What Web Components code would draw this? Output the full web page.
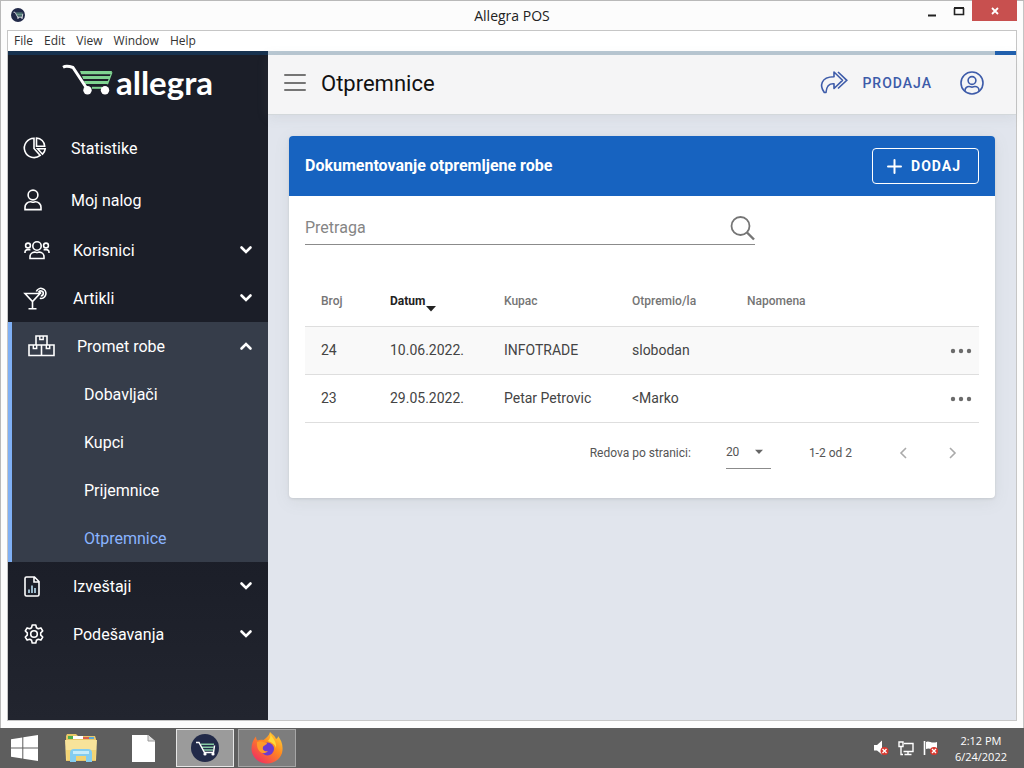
<!DOCTYPE html>
<html lang="sr-Latn">
<head>
<meta charset="utf-8">
<meta name="viewport" content="width=device-width, initial-scale=1">
<title>Allegra POS</title>
<style>
  :root {
    --primary: #1763c0;
    --accent: #8ab4ff;
    --sidebar: #1b1e28;
    --sidebar-open: #363d4a;
    --font-app: Roboto, "Liberation Sans", sans-serif;
    --font-os: "Open Sans", "Noto Sans", sans-serif;
  }
  html, body { height: 100%; }
  body {
    margin: 0;
    display: flex;
    flex-direction: column;
    font-family: var(--font-app);
    background: #5e5e5e;
  }
</style>
</head>
<body>
<os-window title-text="Allegra POS">
  <app-sidebar slot="side">
    <nav-item icon="pie" label="Statistike" tall></nav-item>
    <nav-item icon="user" label="Moj nalog" tall></nav-item>
    <nav-item icon="users" label="Korisnici" group></nav-item>
    <nav-item icon="cocktail" label="Artikli" group></nav-item>
    <nav-item icon="boxes" label="Promet robe" group open>
      <nav-sub label="Dobavljači"></nav-sub>
      <nav-sub label="Kupci"></nav-sub>
      <nav-sub label="Prijemnice"></nav-sub>
      <nav-sub label="Otpremnice" active></nav-sub>
    </nav-item>
    <nav-item icon="report" label="Izveštaji" group></nav-item>
    <nav-item icon="gear" label="Podešavanja" group></nav-item>
  </app-sidebar>
  <app-header heading="Otpremnice"></app-header>
  <doc-card heading="Dokumentovanje otpremljene robe">
    <search-field></search-field>
    <doc-table></doc-table>
    <table-pager></table-pager>
  </doc-card>
</os-window>
<os-taskbar></os-taskbar>

<script>
// name: [width, height, svg content]
const ICONS = {
  pie: [22, 22, `<path d="M10 1.2A9.7 9.7 0 1 0 16.2 18.400L10 11.5Z"/><path d="M12.5 1a8.6 8.6 0 0 1 8.2 8.2h-8.2Z"/><path d="M13.6 11.8h7.6a9 9 0 0 1-2.7 5.4Z"/>`],
  user: [18, 22, `<circle cx="9" cy="6" r="4.9"/><path d="M1 20.600v-2.300a5.600 5.600 0 0 1 5.600-5.600c1 0 1.200.5 2.400.5s1.400-.5 2.400-.5a5.600 5.600 0 0 1 5.600 5.600v2.300Z"/>`],
  users: [26, 20, `<circle cx="13" cy="6" r="4.2"/><circle cx="4" cy="5.500" r="2.400"/><circle cx="22" cy="5.500" r="2.400"/><path d="M6 18.500v-1.800a4.600 4.600 0 0 1 4.600-4.600c.9 0 1.400.4 2.400.4s1.500-.4 2.400-.4a4.600 4.600 0 0 1 4.600 4.600v1.800ZM1 13v-.8a2.600 2.600 0 0 1 2.600-2.600h2.800M25 13v-.8a2.600 2.600 0 0 0-2.600-2.600h-2.800"/>`],
  cocktail: [24, 23, `<path d="M1 6.500h15L8.500 14.500ZM8.500 14.500v7M4.500 21.700h8"/><path d="M12.300 4.500a5 5 0 1 1 3.500 6.800"/><path d="M14.500 5.500a2.500 2.500 0 1 1 2.300 3.400M15 6.500l2-1"/>`],
  boxes: [27, 22, `<path d="M8 10V1h11v9M1 10h25v10.500H1ZM13.500 10v10.500"/><path d="M11.800 1v3.500h3.400V1M5.300 10v3.500h3.400V10M18.300 10v3.500h3.400V10" stroke-width="1.400"/>`],
  report: [16, 21, `<path d="M2.500 1h8L15 5.500V18.500a1.500 1.500 0 0 1-1.500 1.500h-11A1.500 1.500 0 0 1 1 18.500V2.500A1.500 1.500 0 0 1 2.500 1ZM10 1v5h5"/><path d="M5 17v-3.500M8 17V9.500M11 17v-5" stroke="#b9dcf0"/>`],
  gear: [20, 20, `<circle cx="10" cy="10" r="3.300"/><path d="M8.200 1h3.600l.6 2.700 1.900 1.100 2.600-.9 1.800 3.100-2 1.900v2.200l2 1.900-1.800 3.100-2.600-.9-1.900 1.100-.6 2.700H8.200l-.6-2.700-1.900-1.100-2.600.9L1.300 13l2-1.900V8.900L1.300 7l1.800-3.100 2.600.9 1.900-1.100Z" stroke-linejoin="round"/>`],
  down: [12, 8, `<path d="M1.500 1.500 6 6l4.500-4.500" stroke-width="2.600" stroke-linecap="round"/>`],
  up: [12, 8, `<path d="M1.500 6.500 6 2l4.500 4.500" stroke-width="2.600" stroke-linecap="round"/>`],
  menu: [22, 19, `<path d="M1 2h20M1 10h20M1 17h20" stroke-width="2" stroke-linecap="round"/>`],
  share: [28, 23, `<path d="M14 1l8.500 8.300L14 17.500v-4.700c-4.500-.3-7.400 1.400-8 8.700H4.300C-.5 15 .5 5.800 14 5.700Z" stroke-linejoin="round"/><path d="M18 1l8.800 8.300L18 17.500"/>`],
  account: [24, 24, `<circle cx="12" cy="12" r="11"/><circle cx="12" cy="9.500" r="3.900"/><path d="M5 20.300v-.8a4 4 0 0 1 4-4c1.200 0 1.600.6 3 .6s1.800-.6 3-.6a4 4 0 0 1 4 4v.8"/>`],
  plus: [15, 15, `<path d="M7.500 1v13M1 7.500h13" stroke-width="2" stroke-linecap="round"/>`],
  search: [25, 25, `<circle cx="10.500" cy="10" r="9" stroke-width="1.800"/><path d="M17 16.500l7 7" stroke-width="2.400"/>`],
  dots: [22, 6, `<g fill="currentColor" stroke="none"><circle cx="3" cy="3" r="2.200"/><circle cx="11" cy="3" r="2.200"/><circle cx="19" cy="3" r="2.200"/></g>`],
  caret: [10, 6, `<path d="M1 .8h8L5 5Z" fill="currentColor" stroke="none"/>`],
  sort: [10, 7, `<path d="M0 1h10L5 6.500Z" fill="currentColor" stroke="none"/>`],
  prev: [8, 12, `<path d="M7 1 2 6l5 5"/>`],
  next: [8, 12, `<path d="M1 1l5 5-5 5"/>`],
  minimize: [8, 12, `<path d="M0 10.500h8" stroke-width="2"/>`],
  maximize: [10, 8, `<path d="M.5 1v6.500h9V1"/><path d="M0 1h10" stroke-width="2"/>`],
  close: [8, 8, `<path d="M1 1l6 6M7 1 1 7" stroke-width="1.800"/>`],
  cart: [48, 30, `<g fill="#7fd491" stroke="none"><path d="M17 6h32l-1.200 3.200H18.200ZM19 11h28.300l-1.200 3H20.200ZM21 16h24.500l-1.300 3H22.200ZM43.500 19l5-12 1 .5-4.500 12Z"/></g><path d="M0 2.200c3-1.600 6-1 10 .3L23.500 23" stroke="#fff" stroke-width="3" stroke-linejoin="round"/><path d="M29 22.800h10" stroke="#7fd491" stroke-width="2"/><circle cx="24.500" cy="25.200" r="4.200" fill="#fff" stroke="none"/><circle cx="42" cy="25.200" r="4.200" fill="#fff" stroke="none"/>`],
  badge: [28, 28, `<circle cx="14" cy="14" r="14" fill="#222a49" stroke="none"/><path d="M10 10.200h13M11 13.200h11.500M12 16h10" stroke="#86c9a4" stroke-width="1.500"/><path d="M5 8.500h3l5.500 10h9l1-7" stroke="#fff" stroke-width="1.500"/><circle cx="14" cy="20" r="1.600" fill="#fff" stroke="none"/><circle cx="22" cy="20" r="1.600" fill="#fff" stroke="none"/>`],
  windows: [27, 26, `<path d="M0 4.200 11.300 2.500v10H0ZM12.300 2.300 27 0v12.500H12.300ZM0 13.500h11.300v10L0 21.800ZM12.300 13.500H27V26l-14.700-2.300Z" fill="#fff" stroke="none"/>`],
  folder: [32, 30, `<g stroke="none"><path d="M1 3 2 1h9l2 2h17l1 3v22H1Z" fill="#e8c667"/><path d="M3 3h5v3H3Z" fill="#4fae4c"/><path d="M8 3h10v3H8Z" fill="#fff"/><path d="M18 4h6v2h-6Z" fill="#d9604c"/><path d="M24 4h5v2h-5Z" fill="#5aa8d8"/><path d="M0 7h32l-1 20H1Z" fill="#f8e39a"/><path d="M1 17h30l-.500 10H1.500Z" fill="#f2d374"/><path d="M5 29V20q0-4 4-4h14q4 0 4 4v9h-6v-6H11v6Z" fill="#84cdf0"/><path d="M8 18h16v3H8Z" fill="#c7ecfb"/></g>`],
  file: [23, 27, `<path d="M0 0h16l7 6v21H0Z" fill="#fff" stroke="none"/><path d="M16 0v6h7" fill="#ddd" stroke="#999" stroke-width="1"/>`],
  firefox: [32, 32, `<defs><linearGradient id="fx" x1="1" y1="0" x2="0.200" y2="1"><stop offset="0" stop-color="#ffe23c"/><stop offset=".45" stop-color="#ff8a20"/><stop offset="1" stop-color="#f02c62"/></linearGradient></defs><g stroke="none"><path d="M19 0c3 3 5 4 6 7 2-1 2-2 2-3 3 4 5 8 4.500 14C31 26 24 31.500 16 31.500S1 25.500.500 17.500C.3 12 2 8 5 4.500c0 2 .5 3 1.500 4 2-1 4-1 6-.5C15 6 18 4 19 0Z" fill="url(#fx)"/><circle cx="16.500" cy="17" r="6.500" fill="#6c3bd0"/><path d="M6 10c4-2 6 0 10 1 0 2-3 2-4 4-1 3 2 5 5 4-4 5-12 1-11-9Z" fill="#ff9a2a"/><path d="M19 1c2 5 7 8 6 15-1-4-5-6-8-7 2-2 3-5 2-8Z" fill="#ffd93a"/></g>`],
  sound: [15, 16, `<path d="M0 5h3l5-4.500v14L3 10.500H0Z" fill="#fff" stroke="none"/><circle cx="10.500" cy="11" r="4" fill="#d9382f" stroke="none"/><path d="M8.500 9l4 4M12.500 9l-4 4" stroke="#fff" stroke-width="1.300"/>`],
  network: [16, 15, `<path d="M6 2.500h9v8H5.500M10 10.500v3M6.500 13.500h7M1 1h4v4.500H1ZM3 5.500v8h2" stroke="#fff" stroke-width="1.400"/>`],
  flag: [16, 16, `<path d="M1.500 1v14" stroke="#fff"/><path d="M3 2c3-2 5 2 11 0v7C9 11 7 7 3 9Z" fill="#fff" stroke="none"/><circle cx="11" cy="11" r="4" fill="#d9382f" stroke="none"/><path d="M9 9l4 4M13 9l-4 4" stroke="#fff" stroke-width="1.300"/>`]
};

/**
 * <app-icon> - inline SVG icon
 *
 * @attr {string} name - key in ICONS
 * @attr {number} width - optional drawn width, height keeps the ratio
 */
class AppIcon extends HTMLElement {
  constructor() {
    super();
    this.attachShadow({ mode: 'open' });
  }

  connectedCallback() {
    const [w, h, body] = ICONS[this.getAttribute('name')];
    const width = Number(this.getAttribute('width')) || w;
    const height = Math.round(width * h / w);
    this.shadowRoot.innerHTML = `
      <style>
        :host { display: inline-flex; flex: none; }
        svg { display: block; overflow: visible; }
      </style>
      <svg width="${width}" height="${height}" viewBox="0 0 ${w} ${h}" fill="none"
        stroke="currentColor" stroke-width="1.6" aria-hidden="true">${body}</svg>
    `;
  }
}

/**
 * <os-window> - desktop window: title bar, menu bar, app area
 *
 * @slot side - left sidebar
 * @slot - main column
 */
class OsWindow extends HTMLElement {
  constructor() {
    super();
    this.attachShadow({ mode: 'open' });
  }

  connectedCallback() {
    const menus = ['File', 'Edit', 'View', 'Window', 'Help'];
    this.shadowRoot.innerHTML = `
      <style>
        :host {
          flex: 1;
          display: flex;
          flex-direction: column;
          box-sizing: border-box;
          padding: 0 7px 7px;
          background: #fcfcfc;
          box-shadow: inset 1px 1px #b9b9b9, inset -1px 0 #c4c4c4;
        }
        button { border: 0; padding: 0; background: none; font: inherit; color: inherit; }
        .title {
          display: grid;
          grid-template-columns: 1fr auto 1fr;
          height: 30px;
          font: 14px/32px var(--font-os);
          color: #222;
        }
        .title > app-icon { margin: 8px 4px; }
        .controls { display: flex; justify-content: flex-end; align-items: flex-start; color: #222; }
        .controls button { display: grid; place-items: center; width: 27px; height: 21px; }
        .controls .close { width: 45px; background: #c8504f; color: #fff; }
        .frame {
          flex: 1;
          display: flex;
          flex-direction: column;
          border: 1px solid #c6c6c6;
          background: #fff;
        }
        .menu { display: flex; gap: 11px; height: 20px; padding: 0 6px; font: 12px/20px var(--font-os); color: #333; }
        .app { flex: 1; display: flex; }
        .main { flex: 1; min-width: 0; background: #e1e5ed; }
        .progress { display: flex; justify-content: flex-end; height: 4px; background: #b9c8d3; }
        .progress i { width: 21px; background: #2160ad; }
      </style>
      <div class="title">
        <app-icon name="badge" width="14"></app-icon>
        <span>${this.getAttribute('title-text')}</span>
        <div class="controls">
          <button aria-label="Minimize"><app-icon name="minimize"></app-icon></button>
          <button aria-label="Maximize"><app-icon name="maximize"></app-icon></button>
          <button class="close" aria-label="Close"><app-icon name="close"></app-icon></button>
        </div>
      </div>
      <div class="frame">
        <div class="menu">${menus.map(m => `<button>${m}</button>`).join('')}</div>
        <div class="app">
          <slot name="side"></slot>
          <div class="main">
            <div class="progress"><i></i></div>
            <slot></slot>
          </div>
        </div>
      </div>
    `;
  }
}

/** <app-sidebar> - logo and navigation */
class AppSidebar extends HTMLElement {
  constructor() {
    super();
    this.attachShadow({ mode: 'open' });
  }

  connectedCallback() {
    this.shadowRoot.innerHTML = `
      <style>
        :host {
          flex: none;
          width: 260px;
          box-sizing: border-box;
          border-top: 4px solid #17324f;
          background: linear-gradient(var(--sidebar) 75%, #22252f);
          color: #fff;
        }
        .logo {
          display: flex;
          justify-content: center;
          gap: 5px;
          height: 67px;
          padding-top: 10px;
          box-sizing: border-box;
          font: bold 33px/34px Lato, sans-serif;
        }
      </style>
      <div class="logo"><app-icon name="cart"></app-icon><span>allegra</span></div>
      <nav><slot></slot></nav>
    `;
  }
}

/**
 * <nav-item> - first level entry
 *
 * @attr {string} icon
 * @attr {string} label
 * @attr {boolean} tall - plain link, 52px high
 * @attr {boolean} group - has a chevron and sub entries
 * @attr {boolean} open - group is expanded
 */
class NavItem extends HTMLElement {
  constructor() {
    super();
    this.attachShadow({ mode: 'open' });
  }

  connectedCallback() {
    const group = this.hasAttribute('group');
    const open = this.hasAttribute('open');
    const tag = group ? 'button' : 'a href="#"';
    this.shadowRoot.innerHTML = `
      <style>
        :host { display: block; }
        :host([open]) { background: var(--sidebar-open); border-left: 4px solid #7fb0f5; }
        .row {
          display: flex;
          align-items: center;
          width: 100%;
          height: 48px;
          box-sizing: border-box;
          padding: 0 16px;
          border: 0;
          background: none;
          font: 16px/24px var(--font-app);
          color: #fff;
          text-align: left;
          text-decoration: none;
        }
        :host([tall]) .row { height: 52px; }
        .icon { display: flex; width: 49px; }
        :host([tall]) .icon { width: 47px; }
        .label { flex: 1; padding-top: 2px; }
      </style>
      <${tag} class="row">
        <span class="icon"><app-icon name="${this.getAttribute('icon')}"></app-icon></span>
        <span class="label">${this.getAttribute('label')}</span>
        ${group ? `<app-icon name="${open ? 'up' : 'down'}"></app-icon>` : ''}
      </${group ? 'button' : 'a'}>
      <slot></slot>
    `;
  }
}

/** <nav-sub> - second level link */
class NavSub extends HTMLElement {
  constructor() {
    super();
    this.attachShadow({ mode: 'open' });
  }

  connectedCallback() {
    this.shadowRoot.innerHTML = `
      <style>
        :host { display: block; }
        a {
          display: block;
          padding: 13px 16px 11px 72px;
          font: 16px/24px var(--font-app);
          color: #fff;
          text-decoration: none;
        }
        :host([active]) a { color: var(--accent); }
      </style>
      <a href="#">${this.getAttribute('label')}</a>
    `;
  }
}

/** <app-header> - page title and top actions */
class AppHeader extends HTMLElement {
  constructor() {
    super();
    this.attachShadow({ mode: 'open' });
  }

  connectedCallback() {
    this.shadowRoot.innerHTML = `
      <style>
        :host {
          display: flex;
          align-items: center;
          height: 60px;
          box-sizing: border-box;
          padding: 0 32px 4px 16px;
          background: #f5f5f6;
          border-bottom: 1px solid #d3d8db;
          box-shadow: 0 2px 12px rgba(120, 130, 130, .12);
        }
        button, a { display: flex; align-items: center; padding: 0; border: 0; background: none; }
        .menu { color: #757575; }
        h1 { flex: 1; margin: 0 0 0 15px; padding-top: 2px; font-size: 22px; line-height: 32px; font-weight: 400; color: #111; }
        .actions { display: flex; gap: 28px; color: #3d5ba9; }
        .actions a {
          gap: 14px;
          color: inherit;
          font-size: 14px;
          font-weight: 500;
          letter-spacing: 1px;
          text-decoration: none;
        }
        .actions button { color: inherit; }
      </style>
      <button class="menu" aria-label="Meni"><app-icon name="menu"></app-icon></button>
      <h1>${this.getAttribute('heading')}</h1>
      <div class="actions">
        <a href="#"><app-icon name="share"></app-icon>PRODAJA</a>
        <button aria-label="Nalog"><app-icon name="account"></app-icon></button>
      </div>
    `;
  }
}

/** <doc-card> - card with coloured header and the add button */
class DocCard extends HTMLElement {
  constructor() {
    super();
    this.attachShadow({ mode: 'open' });
  }

  connectedCallback() {
    this.shadowRoot.innerHTML = `
      <style>
        :host {
          display: block;
          margin: 21px;
          border-radius: 4px;
          overflow: hidden;
          background: #fff;
          box-shadow: 0 1px 3px rgba(0, 0, 0, .1), 0 4px 16px rgba(120, 130, 120, .1);
        }
        header {
          display: flex;
          align-items: center;
          justify-content: space-between;
          height: 60px;
          padding: 0 16px;
          background: var(--primary);
          color: #fff;
        }
        h2 { margin: 0; font-size: 16px; line-height: 24px; font-weight: 700; }
        button {
          display: flex;
          align-items: center;
          gap: 9px;
          height: 36px;
          padding: 0 17px 0 14px;
          border: 1px solid #fff;
          border-radius: 4px;
          background: none;
          color: #fff;
          font: 700 14px/20px var(--font-app);
          letter-spacing: 1px;
        }
        .body { padding: 16px; }
      </style>
      <header>
        <h2>${this.getAttribute('heading')}</h2>
        <button><app-icon name="plus"></app-icon>DODAJ</button>
      </header>
      <div class="body"><slot></slot></div>
    `;
  }
}

class SearchField extends HTMLElement {
  constructor() {
    super();
    this.attachShadow({ mode: 'open' });
  }

  connectedCallback() {
    this.shadowRoot.innerHTML = `
      <style>
        :host { display: block; margin-bottom: 33px; }
        label {
          display: flex;
          align-items: center;
          max-width: 450px;
          height: 32px;
          border-bottom: 1px solid #8b8b8b;
          color: #757575;
        }
        input {
          flex: 1;
          padding: 0;
          border: 0;
          outline: 0;
          background: none;
          font: 16px/24px var(--font-app);
          color: #333;
        }
        input::placeholder { color: #858585; }
      </style>
      <label><input type="text" placeholder="Pretraga" aria-label="Pretraga"><app-icon name="search"></app-icon></label>
    `;
  }
}

/** <doc-table> - list of documents, sorted by date */
class DocTable extends HTMLElement {
  constructor() {
    super();
    this.attachShadow({ mode: 'open' });
    this._rows = [
      ['24', '10.06.2022.', 'INFOTRADE', 'slobodan', ''],
      ['23', '29.05.2022.', 'Petar Petrovic', '&lt;Marko', '']
    ];
  }

  connectedCallback() {
    this.shadowRoot.innerHTML = `
      <style>
        :host { display: block; }
        table { width: 100%; table-layout: fixed; border-collapse: separate; border-spacing: 0; }
        th, td { box-sizing: border-box; height: 48px; padding: 0 0 2px 16px; text-align: left; white-space: nowrap; border-bottom: 1px solid #dedede; }
        th { height: 49px; font-size: 12px; font-weight: 500; color: #757575; }
        th.sorted { color: #222; font-weight: 700; }
        th app-icon { margin: 0 0 -7px 1px; vertical-align: -7px; }
        td { font-size: 14px; color: #444; }
        tbody tr:nth-child(odd) { background: #f9f9f9; }
        td:last-child, th:last-child { padding: 0 7px 0 0; text-align: right; line-height: 0; }
        button { display: inline-flex; padding: 0; border: 0; background: none; color: #6b6b6b; vertical-align: middle; }
        .c1 { width: 69px; } .c2 { width: 114px; } .c3 { width: 128px; } .c4 { width: 115px; } .c6 { width: 60px; }
      </style>
      <table>
        <colgroup><col class="c1"><col class="c2"><col class="c3"><col class="c4"><col><col class="c6"></colgroup>
        <thead>
          <tr>
            <th>Broj</th>
            <th class="sorted" aria-sort="descending">Datum<app-icon name="sort"></app-icon></th>
            <th>Kupac</th>
            <th>Otpremio/la</th>
            <th>Napomena</th>
            <th></th>
          </tr>
        </thead>
        <tbody>${this._renderRows()}</tbody>
      </table>
    `;
  }

  _renderRows() {
    return this._rows.map(row => `
      <tr>
        ${row.map(cell => `<td>${cell}</td>`).join('')}
        <td><button aria-label="Opcije"><app-icon name="dots"></app-icon></button></td>
      </tr>
    `).join('');
  }
}

class TablePager extends HTMLElement {
  constructor() {
    super();
    this.attachShadow({ mode: 'open' });
  }

  connectedCallback() {
    this.shadowRoot.innerHTML = `
      <style>
        :host {
          display: flex;
          align-items: center;
          justify-content: flex-end;
          height: 59px;
          padding-right: 22px;
          font-size: 12px;
          color: #555;
        }
        .select {
          display: grid;
          align-items: center;
          width: 45px;
          height: 32px;
          margin: 0 38px 0 35px;
          border-bottom: 1px solid #8b8b8b;
        }
        .select > * { grid-area: 1 / 1; }
        .select app-icon { justify-self: end; margin-right: 7px; pointer-events: none; color: #666; }
        select { appearance: none; width: 100%; height: 32px; padding: 0; border: 0; background: none; font: inherit; color: inherit; }
        button { display: flex; padding: 0; border: 0; background: none; color: #aaa; }
        .range { margin-right: 47px; }
        .prev { margin-right: 42px; }
      </style>
      <label for="size">Redova po stranici:</label>
      <span class="select">
        <select id="size"><option>20</option></select>
        <app-icon name="caret"></app-icon>
      </span>
      <span class="range">1-2 od 2</span>
      <button class="prev" disabled aria-label="Prethodna"><app-icon name="prev"></app-icon></button>
      <button disabled aria-label="Sledeća"><app-icon name="next"></app-icon></button>
    `;
  }
}

/** <os-taskbar> - desktop taskbar with pinned apps, tray and clock */
class OsTaskbar extends HTMLElement {
  constructor() {
    super();
    this.attachShadow({ mode: 'open' });
  }

  connectedCallback() {
    this.shadowRoot.innerHTML = `
      <style>
        :host {
          display: flex;
          align-items: center;
          gap: 4px;
          height: 40px;
          padding-right: 17px;
          background: #5e5e5e;
          color: #fff;
          font: 11px/16px var(--font-os);
        }
        button {
          display: grid;
          place-items: center;
          box-sizing: border-box;
          width: 58px;
          height: 38px;
          padding: 0;
          border: 0;
          background: none;
        }
        .start { width: 48px; }
        .open { border: 1px solid #a6a6a6; background: #7d7d7d; }
        .open.active { border-color: #e6e6e6; background: #9b9b9b; }
        .tray { display: flex; align-items: center; gap: 9px; margin: 0 12px 0 auto; }
        .clock { padding-top: 2px; text-align: center; }
      </style>
      <button class="start" aria-label="Start"><app-icon name="windows"></app-icon></button>
      <button aria-label="Explorer"><app-icon name="folder"></app-icon></button>
      <button aria-label="Document"><app-icon name="file"></app-icon></button>
      <button class="open active" aria-label="Allegra"><app-icon name="badge"></app-icon></button>
      <button class="open" aria-label="Firefox"><app-icon name="firefox"></app-icon></button>
      <div class="tray">
        <app-icon name="sound"></app-icon>
        <app-icon name="network"></app-icon>
        <app-icon name="flag"></app-icon>
      </div>
      <div class="clock">2:12 PM<br>6/24/2022</div>
    `;
  }
}

customElements.define('app-icon', AppIcon);
customElements.define('os-window', OsWindow);
customElements.define('app-sidebar', AppSidebar);
customElements.define('nav-item', NavItem);
customElements.define('nav-sub', NavSub);
customElements.define('app-header', AppHeader);
customElements.define('doc-card', DocCard);
customElements.define('search-field', SearchField);
customElements.define('doc-table', DocTable);
customElements.define('table-pager', TablePager);
customElements.define('os-taskbar', OsTaskbar);
</script>
</body>
</html>
